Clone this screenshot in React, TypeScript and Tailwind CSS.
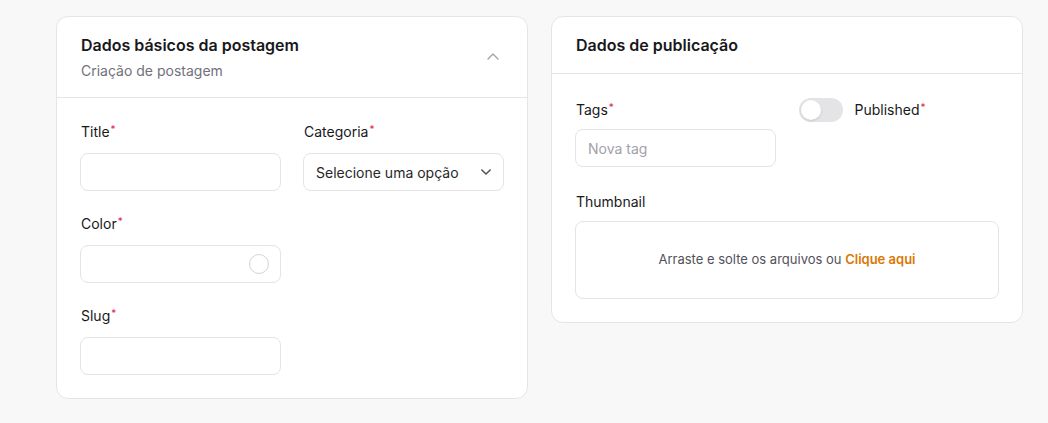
import React from "react";

const Req = () => <span className="text-[#e11d48] text-[10px] align-top relative -top-[3px] ml-[1px]">*</span>;

const Label = ({ children, req }: { children: React.ReactNode; req?: boolean }) => (
  <div className="text-[14px] leading-5 text-[#18181b]">
    {children}
    {req && <Req />}
  </div>
);

const Input = ({ children }: { children?: React.ReactNode }) => (
  <div className="h-[38px] w-full rounded-lg border border-[#e4e4e7] bg-white flex items-center px-3">{children}</div>
);

export default function App() {
  return (
    <div
      className="min-h-[423px] w-[1048px] bg-[#f8f8f8] pl-[56px] pr-[25px] pt-4"
      style={{ fontFamily: "Inter, 'Noto Sans', sans-serif" }}
    >
      <div className="grid grid-cols-2 gap-[23px] items-start">
        {/* Left card */}
        <div className="bg-white rounded-xl border border-[#e5e5e5]">
          <div className="flex items-center justify-between px-6 py-4 border-b border-[#e5e5e5]">
            <div>
              <div className="text-[16px] leading-6 font-semibold text-[#18181b]">Dados básicos da postagem</div>
              <div className="text-[14px] leading-5 text-[#71717a] mt-1">Criação de postagem</div>
            </div>
            <svg width="20" height="20" viewBox="0 0 24 24" fill="none" stroke="#a1a1aa" strokeWidth="1.6" strokeLinecap="round" strokeLinejoin="round">
              <path d="M6 14.5l6-6 6 6" />
            </svg>
          </div>
          <div className="px-[23px] pt-6 pb-[23px] grid grid-cols-2 gap-x-[22px] gap-y-[23px]">
            <div className="flex flex-col gap-[11px]">
              <Label req><span className="pl-px">Title</span></Label>
              <Input />
            </div>
            <div className="flex flex-col gap-[11px]">
              <Label req><span className="pl-px">Categoria</span></Label>
              <Input>
                <span className="text-[14px] text-[#27272a] flex-1">Selecione uma opção</span>
                <svg width="20" height="20" viewBox="0 0 24 24" fill="none" stroke="#52525b" strokeWidth="1.8" strokeLinecap="round" strokeLinejoin="round" className="-mr-[5px]">
                  <path d="M7 9.5l5 5 5-5" />
                </svg>
              </Input>
            </div>
            <div className="flex flex-col gap-[11px]">
              <Label req><span className="pl-px">Color</span></Label>
              <Input>
                <div className="flex-1" />
                <div className="w-5 h-5 rounded-full border border-[#d4d4d8] bg-white -mr-[1px]" />
              </Input>
            </div>
            <div />
            <div className="flex flex-col gap-[11px]">
              <Label req><span className="pl-px">Slug</span></Label>
              <Input />
            </div>
          </div>
        </div>

        {/* Right card */}
        <div className="bg-white rounded-xl border border-[#e5e5e5]">
          <div className="px-6 py-4 border-b border-[#e5e5e5]">
            <div className="text-[16px] leading-6 font-semibold text-[#18181b]">Dados de publicação</div>
          </div>
          <div className="px-[23px] pt-6 pb-[23px] flex flex-col gap-[25px]">
            <div className="grid grid-cols-2 gap-x-[23px]">
              <div className="flex flex-col gap-[7px]">
                <div className="h-6 flex items-center pl-px">
                  <Label req>Tags</Label>
                </div>
                <Input>
                  <span className="text-[14px] text-[#a1a1aa]">Nova tag</span>
                </Input>
              </div>
              <div className="flex items-start gap-3">
                <div className="w-11 h-6 rounded-full bg-[#e4e4e7] p-[2px] flex items-center">
                  <div className="w-5 h-5 rounded-full bg-white shadow-sm" />
                </div>
                <div className="h-6 flex items-center">
                  <Label req>Published</Label>
                </div>
              </div>
            </div>
            <div className="flex flex-col gap-[9px]">
              <div className="pl-px"><Label>Thumbnail</Label></div>
              <div className="h-[78px] rounded-lg border border-[#e4e4e7] flex items-center justify-center text-[13px] text-[#52525b]">
                <span>
                  Arraste e solte os arquivos ou{" "}
                  <span className="font-semibold text-[#d97706]">Clique aqui</span>
                </span>
              </div>
            </div>
          </div>
        </div>
      </div>
    </div>
  );
}
